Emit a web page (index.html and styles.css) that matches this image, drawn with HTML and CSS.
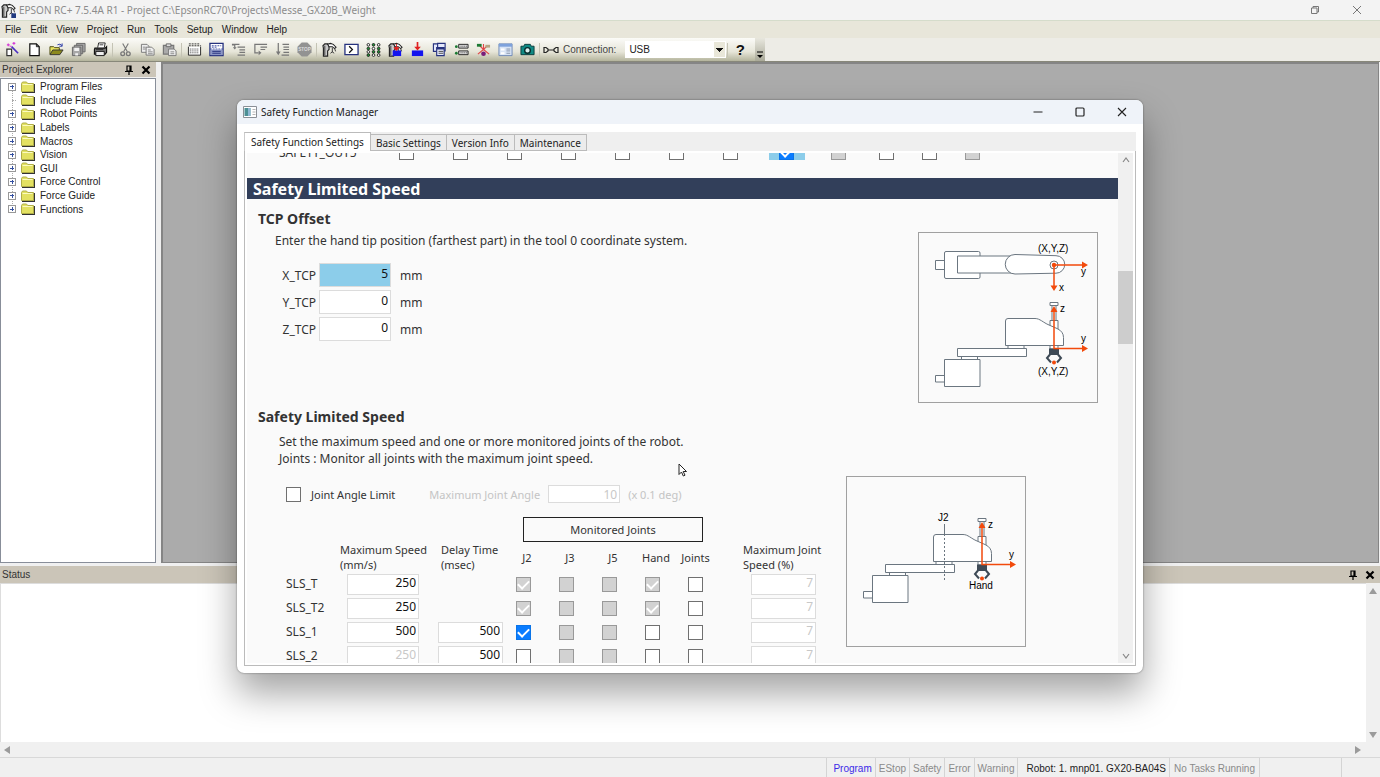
FILE: index.html
```html
<!DOCTYPE html>
<html lang="en">
<head>
    <meta charset="UTF-8">
    <meta name="viewport" content="width=device-width, initial-scale=1.0">
    <title>EPSON RC+ 7.5.4A R1</title>
    <link rel="stylesheet" href="styles.css">
</head>
<body>
    <svg class="defs" aria-hidden="true">
        <symbol id="robot" viewBox="0 0 16 16">
            <path d="M1.500 15V6.500L1 4l2-2h3l1.500 1.500V8L6 9.500V15z" fill="#c9c9c9" stroke="#222" stroke-width="1.200"/>
            <path d="M6 2.500l3-1 3 1 3 3-1.500 1.500L11 5H7.500z" fill="#fff" stroke="#222" stroke-width="1.100"/>
            <path d="M3 4v10M11 6v5M13.500 7l1 3M9 12l2-1.500 2 1.500" fill="none" stroke="#333"/>
        </symbol>
        <symbol id="pin" viewBox="0 0 10 10">
            <path d="M3 1h4v5H3zM6 1v5M1 6.500h8M5 7v3" fill="none" stroke="#000" stroke-width="1.200"/>
        </symbol>
        <symbol id="close" viewBox="0 0 10 10">
            <path d="M1.500 1.500l7 7M8.500 1.500l-7 7" stroke="#000" stroke-width="2.200"/>
        </symbol>
        <symbol id="folder" viewBox="0 0 14 12">
            <path d="M1 11.500h12.500V3" fill="none" stroke="#333" stroke-width="1.400"/>
            <path d="M.5 2.500l1-1.500h4l1.200 1.500H12.500v8H.5z" fill="#e3e162" stroke="#b0ae48"/>
            <path d="M1.500 3.500h10" stroke="#fbfac0"/>
        </symbol>
        <symbol id="arm-side" viewBox="0 0 180 171" overflow="visible">
            <g fill="#fff" stroke="#6b7680" stroke-width="1">
                <path d="M17.500 143.500h9v6.500h-9zM43.500 124.500h16v3h-16zM90 113.500h16v3H90z"/>
                <path d="M26.500 127.500h35.500v27H26.500zM39.500 116.500h69v8h-69z"/>
                <path d="M132 70.500h8v3h-8zM134 73.500h4v15h-4zM132 88.500h8v9h-8zM132 113h8v4h-8z"/>
                <path d="M87.500 113.500V89q0-2.500 2.500-2.500h27c5 0 8 4 14 6.500l8 3.500q6.500 3 6.500 9v8z"/>
            </g>
            <path d="M131 116.500h10v6.500h-10z" fill="#3e4a56"/>
            <path d="M132 122.500l-3 3.500 4 4.500M140 122.500l3 3.500-4 4.500" fill="none" stroke="#3e4a56" stroke-width="2"/>
            <path d="M136 78v38.500h29" fill="none" stroke="#f24a0c" stroke-width="1.500"/>
            <path d="M132.500 80l3.500-6 3.500 6zM164 113l6 3.500-6 3.500z" fill="#f24a0c"/>
            <circle cx="136" cy="130.500" r="2" fill="#f24a0c"/>
            <text x="142" y="80">z</text>
            <text x="163" y="110">y</text>
        </symbol>
    </svg>

    <header class="title-bar">
        <svg class="app-icon" viewBox="0 0 16 16"><use href="#robot"/><path d="M11 11h5v5h-5z" fill="#223a80"/></svg>
        <span class="app-title">EPSON RC+ 7.5.4A R1 - Project C:\EpsonRC70\Projects\Messe_GX20B_Weight</span>
        <button class="window-button" aria-label="Restore"><svg viewBox="0 0 10 10"><path d="M1.500 3h5.500v5.500H1.500zM3 3V1.500h5.500V7H7" fill="none" stroke="#777"/></svg></button>
        <button class="window-button" aria-label="Close"><svg viewBox="0 0 10 10"><path d="M1 1l8 8M9 1L1 9" stroke="#777"/></svg></button>
    </header>

    <nav class="menu-bar">
        <button>File</button>
        <button>Edit</button>
        <button>View</button>
        <button>Project</button>
        <button>Run</button>
        <button>Tools</button>
        <button>Setup</button>
        <button>Window</button>
        <button>Help</button>
    </nav>

    <div class="toolbar-row">
        <div class="toolbar">
            <button aria-label="New Project"><svg viewBox="0 0 16 16"><path d="M2 7.500h5v7H2z" fill="#fff" stroke="#333" stroke-width="1.300"/><path d="M7 5l7 7" stroke="#4b2fc0" stroke-width="1.800"/><path d="M2 3h3M3.500 1.500v3M8 1.500h3M9.500 0v3M5 4.500h2" stroke="#d63bd6" stroke-width="1.200"/></svg></button>
            <button aria-label="New"><svg viewBox="0 0 16 16"><path d="M3 2h7l3 3v9.500H3z" fill="#fff" stroke="#111" stroke-width="1.300"/><path d="M10 2v3h3" fill="none" stroke="#111"/></svg></button>
            <button aria-label="Open"><svg viewBox="0 0 16 16"><path d="M1 13V5h4l1 1h5v3" fill="#e8e460" stroke="#4c4a10"/><path d="M1 13.500l3-5h11l-3.500 5z" fill="#8c8a1c" stroke="#333"/><path d="M9 3q3-2 5 1M14 1.500V4.500h-3" fill="none" stroke="#2a3aa8"/></svg></button>
            <button aria-label="Save All"><svg viewBox="0 0 16 16"><g fill="#a8a8a8" stroke="#666"><path d="M6 1.500h9v9H6z"/><path d="M3.500 3.500h9v9h-9z"/><path d="M1.500 5.500h9v9h-9z"/></g><path d="M3.500 6h5v3.500h-5zM4.500 12h3v2.500h-3z" fill="#f1f1f1"/></svg></button>
            <button aria-label="Print"><svg viewBox="0 0 16 16"><path d="M5 6l1-5h7l-1 5" fill="#fff" stroke="#222"/><path d="M2 6.500h11l1.500-1.500V11L13 13H1.500V8z" fill="#777" stroke="#111" stroke-width="1.200"/><path d="M3 10h9v4.500H3z" fill="#eee" stroke="#111"/><path d="M7 3h4M3 8h8" stroke="#333"/></svg></button>
            <span class="separator"></span>
            <button aria-label="Cut"><svg viewBox="0 0 16 16"><path d="M5 1.500l5 9M11 1.500l-5 9" stroke="#777" stroke-width="1.200"/><g fill="none" stroke="#777" stroke-width="1.400"><circle cx="5" cy="12.500" r="2"/><circle cx="11" cy="12.500" r="2"/></g></svg></button>
            <button aria-label="Copy"><svg viewBox="0 0 16 16"><g fill="#eee" stroke="#777"><path d="M1.500 2.500h6l2 2v6.500h-8z"/><path d="M6.500 5.500h6l2.500 2.500v6H6.500z"/></g><path d="M3 5.500h3M3 7.500h3M8.500 8.500h3M8.500 10.500h5M8.500 12.500h5" stroke="#888"/></svg></button>
            <button aria-label="Paste"><svg viewBox="0 0 16 16"><path d="M1.500 3.500h11v9.500h-11z" fill="#aaa" stroke="#777" stroke-width="1.300"/><path d="M4.500 2h5v3h-5z" fill="#ddd" stroke="#666"/><path d="M7 7.500h6l2 2V14.500H7z" fill="#eee" stroke="#777"/><path d="M9 10.500h4M9 12.500h4" stroke="#888"/></svg></button>
            <span class="separator"></span>
            <button aria-label="Build"><svg viewBox="0 0 16 16"><path d="M1.500 5v9h13V5" fill="#fff" stroke="#222"/><path d="M2 4h13M2 2h12" stroke="#333" stroke-dasharray="2 1"/><path d="M3 7.500h10M3 9.500h10M3 11.500h10" stroke="#333" stroke-dasharray="1 1"/></svg></button>
            <button aria-label="Run Window"><svg viewBox="0 0 16 16"><path d="M1 1.500h14v13H1z" fill="#fff" stroke="#26327e" stroke-width="1.400"/><path d="M1 7.500h14M3 4h10M3 5.500h6" stroke="#3948a0" stroke-dasharray="2 1"/><path d="M2 8h12v6H2z" fill="#8b96c6"/><path d="M3.500 10h9M3.500 12h9" stroke="#26327e"/></svg></button>
            <button aria-label="Step Into"><svg viewBox="0 0 16 16"><path d="M4 6V3H1M1 2.500h8M7 5.500h8M9 8.500h6M9 11h6M7 14h8" fill="none" stroke="#777" stroke-width="1.300"/><path d="M2 5.500h4L4 8z" fill="#777"/></svg></button>
            <button aria-label="Step Over"><svg viewBox="0 0 16 16"><path d="M4 2.500H2v9h4M4 2.500h11M8 5.500h7M8 8h5" fill="none" stroke="#777" stroke-width="1.300"/><path d="M6 9l3 2.500L6 14z" fill="#777"/></svg></button>
            <button aria-label="Walk"><svg viewBox="0 0 16 16"><path d="M3.500 1v10M8 2.500h7M9 5.500h6M9 8h6M9 11h6M7 14h8" stroke="#777" stroke-width="1.300"/><path d="M1 10h5l-2.500 4z" fill="#777"/></svg></button>
            <button aria-label="Stop"><svg viewBox="0 0 16 16"><path d="M5 .5h6L15.500 5v6L11 15.500H5L.5 11V5z" fill="#929292"/><text class="stop-text" x="8" y="10">STOP</text></svg></button>
            <span class="separator"></span>
            <button aria-label="Robot Manager"><svg viewBox="0 0 16 16"><use href="#robot"/></svg></button>
            <button aria-label="Command Window"><svg viewBox="0 0 16 16"><path d="M1 2.500h14v11H1z" fill="#fff" stroke="#26327e" stroke-width="1.400"/><path d="M5.500 4.500L9 8l-3.500 3.500" fill="none" stroke="#111" stroke-width="1.300"/></svg></button>
            <button aria-label="I/O Monitor"><svg viewBox="0 0 16 16"><g fill="#fff" stroke="#222"><circle cx="2.500" cy="3" r="1.400"/><circle cx="8" cy="7" r="1.400"/><circle cx="13.500" cy="3" r="1.400"/><circle cx="2.500" cy="10.500" r="1.400"/><circle cx="13.500" cy="14" r="1.400"/><circle cx="8" cy="14" r="1.400"/></g><g fill="#1c9a33" stroke="#222"><circle cx="8" cy="3" r="1.400"/><circle cx="2.500" cy="7" r="1.400"/><circle cx="13.500" cy="7" r="1.400"/><circle cx="8" cy="10.500" r="1.400"/><circle cx="13.500" cy="10.500" r="1.400"/><circle cx="2.500" cy="14" r="1.400"/></g></svg></button>
            <button aria-label="Task Manager"><svg viewBox="0 0 16 16"><use href="#robot"/><path d="M5 9h9v6H5z" fill="#1414ee"/><path d="M9 2v5M6.500 6h5L9 9z" fill="#e02020" stroke="#e02020"/></svg></button>
            <button aria-label="Download"><svg viewBox="0 0 16 16"><path d="M2 9h12v6H2z" fill="#1414ee"/><path d="M8 0v6" stroke="#e02020" stroke-width="1.800"/><path d="M4.500 5h7L8 9z" fill="#e02020"/></svg></button>
            <button aria-label="Copy Windows"><svg viewBox="0 0 16 16"><g fill="#e4e8fb" stroke="#26327e" stroke-width="1.200"><path d="M1.500 2h8v8h-8z"/><path d="M6 1.500h8v8H6z"/><path d="M5 6h8v8.500H5z"/></g><path d="M5 7h8" stroke="#26327e" stroke-width="2"/><path d="M7 10h5M7 12h5" stroke="#444"/></svg></button>
            <button aria-label="Controller"><svg viewBox="0 0 16 16"><g fill="#ddd" stroke="#222"><path d="M5 2.500h10v4H5z"/><path d="M5 9.500h10v4H5z"/></g><path d="M7 4.500h7M7 11.500h7" stroke="#444" stroke-dasharray="1 1"/><circle cx="2.500" cy="5" r="1.500" fill="#1c7a33"/><circle cx="2.500" cy="12" r="1.500" fill="#1c7a33"/></svg></button>
            <button aria-label="Force Monitor"><svg viewBox="0 0 16 16"><path d="M8 8V2M8 8l-6 5M8 8l6 5M8 8L4 4M8 8l4-4" stroke="#e04848" stroke-width="1.200"/><path d="M1 2h5v3H1z" fill="#1c7a33"/><path d="M10 3h5v3h-5z" fill="#b7a584"/><circle cx="8" cy="12.500" r="2.500" fill="#7a1c7a"/></svg></button>
            <button aria-label="GUI Builder"><svg viewBox="0 0 16 16"><path d="M1 2h14v12.500H1z" fill="#d8e4f5" stroke="#6d88b5"/><path d="M1 2h14v3H1z" fill="#7ea2dc"/><path d="M3 7h4v2H3zM3 11h4v2H3z" fill="#fff"/><path d="M9 7.500h4M9 9.500h4M9 12h4" stroke="#8592a8"/></svg></button>
            <button aria-label="Camera"><svg viewBox="0 0 16 16"><path d="M1 4.500h3l1-2h6l1 2h3v9H1z" fill="#0f8a84" stroke="#0b3b3a"/><circle cx="8" cy="9" r="3" fill="#d7efee" stroke="#062c2b" stroke-width="1.500"/></svg></button>
            <span class="separator"></span>
            <label class="connection" for="connection">
                <svg viewBox="0 0 16 8"><path d="M1 1.500h2L5 3v2L3 6.500H1zM15 1.500h-2L11 3v2l2 1.500h2zM5 4h6" fill="none" stroke="#222" stroke-width="1.200"/></svg>
                Connection:
            </label>
            <div class="select-box">
                <select id="connection"><option>USB</option></select>
            </div>
            <span class="separator"></span>
            <button class="help" aria-label="Help">?</button>
        </div>
        <button class="overflow" aria-label="More buttons"><svg viewBox="0 0 8 8"><path d="M1 1h6" stroke="#000"/><path d="M1 4h6L4 7z"/></svg></button>
    </div>

    <main class="workspace">
        <aside class="explorer">
            <div class="panel-header">
                <span>Project Explorer</span>
                <button aria-label="Pin"><svg><use href="#pin"/></svg></button>
                <button aria-label="Close"><svg><use href="#close"/></svg></button>
            </div>
            <div class="tree-pane">
                <ul class="tree">
                    <li><button class="expander" aria-label="Expand"></button><svg><use href="#folder"/></svg>Program Files</li>
                    <li><span class="branch"></span><svg><use href="#folder"/></svg>Include Files</li>
                    <li><button class="expander" aria-label="Expand"></button><svg><use href="#folder"/></svg>Robot Points</li>
                    <li><button class="expander" aria-label="Expand"></button><svg><use href="#folder"/></svg>Labels</li>
                    <li><button class="expander" aria-label="Expand"></button><svg><use href="#folder"/></svg>Macros</li>
                    <li><button class="expander" aria-label="Expand"></button><svg><use href="#folder"/></svg>Vision</li>
                    <li><button class="expander" aria-label="Expand"></button><svg><use href="#folder"/></svg>GUI</li>
                    <li><button class="expander" aria-label="Expand"></button><svg><use href="#folder"/></svg>Force Control</li>
                    <li><button class="expander" aria-label="Expand"></button><svg><use href="#folder"/></svg>Force Guide</li>
                    <li><button class="expander" aria-label="Expand"></button><svg><use href="#folder"/></svg>Functions</li>
                </ul>
            </div>
        </aside>
        <div class="mdi-area"></div>
    </main>

    <section class="status-panel">
        <div class="panel-header">
            <span>Status</span>
            <button aria-label="Pin"><svg><use href="#pin"/></svg></button>
            <button aria-label="Close"><svg><use href="#close"/></svg></button>
        </div>
        <div class="status-body">
            <div class="status-log"></div>
            <div class="scroll-y">
                <svg viewBox="0 0 8 6"><path d="M0 6h8L4 0z"/></svg>
                <svg viewBox="0 0 8 6"><path d="M0 0h8L4 6z"/></svg>
            </div>
        </div>
        <div class="scroll-x">
            <svg viewBox="0 0 6 8"><path d="M6 0v8L0 4z"/></svg>
            <svg viewBox="0 0 6 8"><path d="M0 0v8l6-4z"/></svg>
        </div>
    </section>

    <footer class="status-bar">
        <span class="cell program">Program</span>
        <span class="cell">EStop</span>
        <span class="cell">Safety</span>
        <span class="cell">Error</span>
        <span class="cell">Warning</span>
        <span class="cell robot">Robot: 1. mnp01. GX20-BA04S</span>
        <span class="cell tasks">No Tasks Running</span>
        <span class="cell blank"></span>
        <span class="cell grip"></span>
    </footer>

    <!-- Safety Function Manager window -->
    <div class="dialog" role="dialog" aria-labelledby="dialog-title">
        <div class="dialog-title">
            <svg class="dialog-icon" viewBox="0 0 14 12"><path d="M.5.5h13v11H.5z" fill="#fff" stroke="#8a8f96"/><path d="M1.500 2h6v8h-6z" fill="#4b8f94"/><path d="M5 2h2.500v8H5z" fill="#8fb7d2"/><path d="M9.500 3.500h3M9.500 6h3M9.500 8.500h3" stroke="#b5b5b5"/></svg>
            <span id="dialog-title">Safety Function Manager</span>
            <button class="window-button" aria-label="Minimize"><svg viewBox="0 0 10 10"><path d="M.5 5h9" stroke="#222"/></svg></button>
            <button class="window-button" aria-label="Maximize"><svg viewBox="0 0 10 10"><rect x="1" y="1" width="8" height="8" rx="1" fill="none" stroke="#222" stroke-width="1.200"/></svg></button>
            <button class="window-button" aria-label="Close"><svg viewBox="0 0 10 10"><path d="M1 1l8 8M9 1L1 9" stroke="#222" stroke-width="1.100"/></svg></button>
        </div>
        <div class="dialog-body">
            <div class="tabs" role="tablist">
                <button class="tab active" role="tab" aria-selected="true">Safety Function Settings</button>
                <button class="tab" role="tab">Basic Settings</button>
                <button class="tab" role="tab">Version Info</button>
                <button class="tab" role="tab">Maintenance</button>
            </div>
            <div class="tab-panel" role="tabpanel">
                <div class="settings">
                    <div class="outputs-row">
                        <span>SAFETY_OUT5</span>
                        <input type="checkbox" aria-label="Output 1">
                        <input type="checkbox" aria-label="Output 2">
                        <input type="checkbox" aria-label="Output 3">
                        <input type="checkbox" aria-label="Output 4">
                        <input type="checkbox" aria-label="Output 5">
                        <input type="checkbox" aria-label="Output 6">
                        <input type="checkbox" aria-label="Output 7">
                        <span class="changed"><input type="checkbox" aria-label="Output 8" checked></span>
                        <input type="checkbox" aria-label="Output 9" disabled>
                        <input type="checkbox" aria-label="Output 10">
                        <input type="checkbox" aria-label="Output 11">
                        <input type="checkbox" aria-label="Output 12" disabled>
                    </div>

                    <h2>Safety Limited Speed</h2>

                    <section class="tcp-section">
                        <div>
                            <h3>TCP Offset</h3>
                            <p class="hint">Enter the hand tip position (farthest part) in the tool 0 coordinate system.</p>
                            <div class="tcp-fields">
                                <label for="x-tcp">X_TCP</label><input class="number edited" type="text" id="x-tcp" value="5"><span>mm</span>
                                <label for="y-tcp">Y_TCP</label><input class="number" type="text" id="y-tcp" value="0"><span>mm</span>
                                <label for="z-tcp">Z_TCP</label><input class="number" type="text" id="z-tcp" value="0"><span>mm</span>
                            </div>
                        </div>
                        <svg class="figure" viewBox="1 1 178 169" role="img" aria-label="TCP offset axes">
                            <g fill="#fff" stroke="#6b7680">
                                <path d="M17.500 28.500h9v9h-9z"/>
                                <rect x="26.500" y="19.500" width="35.500" height="27" rx="1.500"/>
                                <path d="M39.500 24H98v17H39.500z"/>
                                <path d="M97 22.500l41 1.200a8.500 8.500 0 0 1 0 17.500L97 42a9.700 9.700 0 0 1 0-19.500z"/>
                                <circle cx="136" cy="33" r="4"/>
                            </g>
                            <circle cx="136" cy="33" r="2.200" fill="#f24a0c"/>
                            <path d="M136 54V33h29" fill="none" stroke="#f24a0c" stroke-width="1.500"/>
                            <path d="M132.500 53.500l3.500 5.500 3.500-5.500zM164 29.500l6 3.500-6 3.500z" fill="#f24a0c"/>
                            <text x="120" y="20">(X,Y,Z)</text>
                            <text x="163" y="43">y</text>
                            <text x="141" y="59">x</text>
                            <use href="#arm-side" width="180" height="171"/>
                            <text x="120" y="143">(X,Y,Z)</text>
                        </svg>
                    </section>

                    <section class="speed-section">
                        <div>
                            <h3>Safety Limited Speed</h3>
                            <p class="lead">Set the maximum speed and one or more monitored joints of the robot.<br>Joints : Monitor all joints with the maximum joint speed.</p>
                            <div class="angle-row">
                                <input type="checkbox" id="angle-limit">
                                <label for="angle-limit">Joint Angle Limit</label>
                                <label class="off" for="max-angle">Maximum Joint Angle</label>
                                <input class="number" type="text" id="max-angle" value="10" disabled>
                                <span class="off">(x 0.1 deg)</span>
                            </div>
                            <table class="speed-table">
                                <colgroup>
                                    <col class="col-name"><col class="col-speed"><col class="col-delay">
                                    <col class="col-joint"><col class="col-joint"><col class="col-joint"><col class="col-joint"><col class="col-joint">
                                    <col class="col-max">
                                </colgroup>
                                <thead>
                                    <tr class="group">
                                        <td colspan="3"></td>
                                        <th colspan="5"><div class="monitored">Monitored Joints</div></th>
                                        <td></td>
                                    </tr>
                                    <tr class="heads">
                                        <td></td>
                                        <th class="left">Maximum Speed<br>(mm/s)</th>
                                        <th class="left delay">Delay Time<br>(msec)</th>
                                        <th class="joint">J2</th>
                                        <th class="joint">J3</th>
                                        <th class="joint">J5</th>
                                        <th class="joint">Hand</th>
                                        <th>Joints</th>
                                        <th class="left max">Maximum Joint<br>Speed (%)</th>
                                    </tr>
                                </thead>
                                <tbody>
                                    <tr>
                                        <th>SLS_T</th>
                                        <td class="speed"><input class="number" type="text" aria-label="SLS_T speed" value="250"></td>
                                        <td></td>
                                        <td><input type="checkbox" aria-label="SLS_T J2" checked disabled></td>
                                        <td><input type="checkbox" aria-label="SLS_T J3" disabled></td>
                                        <td><input type="checkbox" aria-label="SLS_T J5" disabled></td>
                                        <td><input type="checkbox" aria-label="SLS_T Hand" checked disabled></td>
                                        <td><input type="checkbox" aria-label="SLS_T Joints"></td>
                                        <td class="max"><input class="number" type="text" aria-label="SLS_T joint speed" value="7" disabled></td>
                                    </tr>
                                    <tr>
                                        <th>SLS_T2</th>
                                        <td class="speed"><input class="number" type="text" aria-label="SLS_T2 speed" value="250"></td>
                                        <td></td>
                                        <td><input type="checkbox" aria-label="SLS_T2 J2" checked disabled></td>
                                        <td><input type="checkbox" aria-label="SLS_T2 J3" disabled></td>
                                        <td><input type="checkbox" aria-label="SLS_T2 J5" disabled></td>
                                        <td><input type="checkbox" aria-label="SLS_T2 Hand" checked disabled></td>
                                        <td><input type="checkbox" aria-label="SLS_T2 Joints"></td>
                                        <td class="max"><input class="number" type="text" aria-label="SLS_T2 joint speed" value="7" disabled></td>
                                    </tr>
                                    <tr>
                                        <th>SLS_1</th>
                                        <td class="speed"><input class="number" type="text" aria-label="SLS_1 speed" value="500"></td>
                                        <td><input class="number" type="text" aria-label="SLS_1 delay" value="500"></td>
                                        <td><input type="checkbox" aria-label="SLS_1 J2" checked></td>
                                        <td><input type="checkbox" aria-label="SLS_1 J3" disabled></td>
                                        <td><input type="checkbox" aria-label="SLS_1 J5" disabled></td>
                                        <td><input type="checkbox" aria-label="SLS_1 Hand"></td>
                                        <td><input type="checkbox" aria-label="SLS_1 Joints"></td>
                                        <td class="max"><input class="number" type="text" aria-label="SLS_1 joint speed" value="7" disabled></td>
                                    </tr>
                                    <tr>
                                        <th>SLS_2</th>
                                        <td class="speed"><input class="number" type="text" aria-label="SLS_2 speed" value="250" disabled></td>
                                        <td><input class="number" type="text" aria-label="SLS_2 delay" value="500"></td>
                                        <td><input type="checkbox" aria-label="SLS_2 J2"></td>
                                        <td><input type="checkbox" aria-label="SLS_2 J3" disabled></td>
                                        <td><input type="checkbox" aria-label="SLS_2 J5" disabled></td>
                                        <td><input type="checkbox" aria-label="SLS_2 Hand"></td>
                                        <td><input type="checkbox" aria-label="SLS_2 Joints"></td>
                                        <td class="max"><input class="number" type="text" aria-label="SLS_2 joint speed" value="7" disabled></td>
                                    </tr>
                                </tbody>
                            </table>
                        </div>
                        <svg class="figure" viewBox="1 1 178 169" role="img" aria-label="Monitored joint J2 and hand">
                            <use href="#arm-side" width="180" height="171" y="-28"/>
                            <path d="M98.500 48v10" stroke="#6b7680"/>
                            <path d="M98.500 58v46" stroke="#6b7680" stroke-dasharray="2 2"/>
                            <text x="92" y="45">J2</text>
                            <text x="123" y="113">Hand</text>
                        </svg>
                    </section>
                </div>
                <div class="panel-scroll">
                    <svg viewBox="0 0 8 8"><path d="M1 6l3-4 3 4" fill="none" stroke="#888" stroke-width="1.200"/></svg>
                    <div class="track"><div class="thumb"></div></div>
                    <svg viewBox="0 0 8 8"><path d="M1 2l3 4 3-4" fill="none" stroke="#888" stroke-width="1.200"/></svg>
                </div>
            </div>
        </div>
    </div>

    <svg class="cursor" viewBox="0 0 10 14" aria-hidden="true"><path d="M1 1v10.500l2.500-2.500 1.800 4 1.700-.8-1.800-3.700H8.500z" fill="#fff" stroke="#222"/></svg>
</body>
</html>
```
FILE: styles.css
```css
* {
    box-sizing: border-box;
}
body {
    margin: 0;
    height: 100vh;
    overflow: hidden;
    display: flex;
    flex-direction: column;
    position: relative;
    background-color: #f0f0f0;
    color: #222;
    font-family: "Liberation Sans", Arial, sans-serif;
    font-size: 10px;
}
button {
    display: flex;
    align-items: center;
    justify-content: center;
    padding: 0;
    border: none;
    background: none;
    color: inherit;
    font: inherit;
}
.defs {
    display: none;
}

/* main window */
.title-bar {
    display: flex;
    align-items: center;
    height: 20px;
    flex: none;
    padding-right: 2px;
    background-color: #f3f3f3;
    color: #8c8c8c;
    font-family: "Noto Sans", sans-serif;
}
.app-icon {
    width: 15px;
    height: 15px;
    margin: 0 3px 0 1px;
}
.app-title {
    flex: 1;
}
.window-button {
    width: 42px;
    height: 20px;
}
.window-button svg {
    width: 10px;
    height: 10px;
}
.menu-bar {
    display: flex;
    align-items: center;
    gap: 9px;
    height: 18px;
    flex: none;
    padding-left: 5px;
    border-top: 1px solid #d5dccb;
    background-color: #e8e6da;
}
.toolbar-row {
    display: flex;
    height: 24px;
    flex: none;
    border-bottom: 1px solid #88887a;
    background-color: #edece6;
}
.toolbar {
    display: flex;
    align-items: center;
    width: 755px;
    padding-left: 1px;
    background: linear-gradient(#fbfbf8, #e6e5d8 60%, #b4b49c);
}
.toolbar button {
    width: 22px;
    height: 22px;
}
.toolbar button svg {
    width: 15px;
    height: 15px;
}
.stop-text {
    font-size: 5px;
    font-weight: bold;
    fill: #ddd;
    text-anchor: middle;
}
.separator {
    width: 1px;
    height: 14px;
    margin: 0 1px;
    background-color: #c4c3b4;
}
.connection {
    display: flex;
    align-items: center;
    gap: 4px;
    margin-left: 2px;
    color: #444;
}
.connection svg {
    width: 16px;
    height: 8px;
}
.select-box {
    display: flex;
    width: 101px;
    height: 17px;
    margin-left: 9px;
    background-color: #fff;
}
.select-box select {
    flex: 1;
    border: none;
    appearance: none;
    padding: 0 4px;
    color: #222;
    font: inherit;
    background: linear-gradient(#111, #111) no-repeat right 3px top 7px / 7px 1px,
        linear-gradient(#111, #111) no-repeat right 4px top 8px / 5px 1px,
        linear-gradient(#111, #111) no-repeat right 5px top 9px / 3px 1px,
        linear-gradient(#111, #111) no-repeat right 6px top 10px / 1px 1px,
        linear-gradient(#e9e7d9, #e9e7d9) no-repeat right 1px top 1px / 11px 15px,
        #fff;
}
.toolbar .help {
    font-size: 15px;
    font-weight: bold;
    color: #111;
}
.overflow {
    width: 10px;
    align-items: flex-end;
    padding-bottom: 2px;
    background: linear-gradient(#e8e7de, #a9a998);
}
.overflow svg {
    width: 8px;
    height: 8px;
}
.workspace {
    display: flex;
    flex: 1;
    min-height: 0;
    padding-bottom: 3px;
}
.explorer {
    display: flex;
    flex-direction: column;
    width: 156px;
}
.panel-header {
    display: flex;
    align-items: center;
    gap: 7px;
    height: 15px;
    flex: none;
    padding: 0 5px 0 2px;
    background-color: #cbc5b8;
    color: #333;
}
.panel-header span {
    flex: 1;
}
.panel-header svg {
    display: block;
    width: 10px;
    height: 10px;
}
.tree-pane {
    flex: 1;
    margin-top: 1px;
    border: 1px solid #888e99;
    background-color: #fff;
}
.tree {
    display: grid;
    grid-auto-rows: 1fr;
    height: 137px;
    margin: 0;
    padding: 1px 0 0 7px;
    list-style: none;
    background: repeating-linear-gradient(#aaa 0 1px, #fff 1px 2px) no-repeat 11px 8px / 1px 124px;
}
.tree li {
    display: flex;
    align-items: center;
}
.tree svg {
    width: 14px;
    height: 12px;
    margin: 0 5px 0 5px;
}
.expander {
    width: 8px;
    height: 8px;
    border: 1px solid #999;
    background: linear-gradient(#3450a0, #3450a0) no-repeat center / 4px 1px,
        linear-gradient(#3450a0, #3450a0) no-repeat center / 1px 4px,
        #fff;
}
.branch {
    width: 4px;
    margin-left: 4px;
    border-top: 1px dotted #aaa;
}
.mdi-area {
    flex: 1;
    margin: 0 1px 0 5px;
    border: 1px solid #858585;
    border-width: 2px 1px 1px 2px;
    background-color: #ababab;
}

/* status panel */
.status-panel {
    display: flex;
    flex-direction: column;
    height: 191px;
    flex: none;
}
.status-panel .panel-header {
    height: 17px;
}
.status-body {
    display: flex;
    flex: 1;
}
.status-log {
    flex: 1;
    border: 1px solid #ddd;
    border-width: 1px 0 0 1px;
    background-color: #fff;
}
.scroll-y,
.scroll-x {
    display: flex;
    align-items: center;
    justify-content: space-between;
    fill: #9b9b9b;
}
.scroll-y {
    flex-direction: column;
    width: 14px;
    padding: 5px 0 4px;
}
.scroll-y svg {
    width: 8px;
    height: 6px;
}
.scroll-x {
    height: 15px;
    padding: 0 19px 0 4px;
}
.scroll-x svg {
    width: 6px;
    height: 8px;
}
.status-bar {
    display: flex;
    justify-content: flex-end;
    height: 20px;
    flex: none;
    border-top: 1px solid #d8d8d8;
    color: #8a8a8a;
}
.cell {
    padding: 0 3px;
    border-left: 1px solid #d4d4d4;
    line-height: 21px;
}
.cell.program {
    padding-left: 6px;
    color: #3b2be8;
}
.cell.robot {
    padding-left: 8px;
    color: #222;
}
.cell.tasks {
    padding: 0 4px;
}
.cell.blank {
    width: 82px;
}
.cell.grip {
    width: 39px;
}

/* safety function manager */
.dialog {
    position: absolute;
    top: 100px;
    right: 237px;
    bottom: 104px;
    left: 237px;
    display: flex;
    flex-direction: column;
    overflow: hidden;
    border-radius: 7px;
    background-color: #fff;
    box-shadow: 0 0 2px rgba(0, 0, 0, 0.5), 0 20px 36px rgba(0, 0, 0, 0.36);
    color: #333;
    font-family: "Noto Sans", sans-serif;
    font-size: 11px;
}
.dialog-title {
    display: flex;
    align-items: center;
    height: 24px;
    flex: none;
    padding-left: 6px;
    background-color: #eff3f9;
    color: #222;
    font-size: 10px;
}
.dialog-title span {
    flex: 1;
}
.dialog-icon {
    width: 14px;
    height: 12px;
    margin-right: 4px;
}
.dialog-body {
    display: flex;
    flex-direction: column;
    flex: 1;
    min-height: 0;
    padding: 8px 7px 7px;
}
.tabs {
    display: flex;
    align-items: flex-end;
    height: 19px;
    flex: none;
    background-color: #efefef;
}
.tab {
    height: 17px;
    padding: 0 5px;
    border: 1px solid #bbb;
    border-left: none;
    background-color: #ececec;
    color: #222;
    font-size: 10px;
}
.tab.active {
    height: 19px;
    padding: 0 6px;
    border-left: 1px solid #ccc;
    border-bottom: none;
    background-color: #fff;
}
.tab-panel {
    display: flex;
    flex: 1;
    min-height: 0;
    padding: 2px;
    border: 1px solid #bbb;
    border-top: none;
}
.settings {
    flex: 1;
    min-width: 0;
    overflow: hidden;
    background-color: #fafafa;
}
input[type="checkbox"] {
    display: grid;
    place-content: center;
    appearance: none;
    width: 15px;
    height: 15px;
    margin: 0;
    border: 1px solid #707070;
    background-color: #fff;
}
input[type="checkbox"]:checked {
    border-color: #0a74e8;
    background-color: #0a7cff;
}
input[type="checkbox"]:checked::after {
    content: "";
    width: 5px;
    height: 9px;
    margin-bottom: 2px;
    border: solid #fff;
    border-width: 0 2px 2px 0;
    transform: rotate(45deg);
}
input[type="checkbox"]:disabled {
    border-color: #999;
    background-color: #d2d2d2;
}
/* first row is scrolled half out of view */
.outputs-row {
    display: grid;
    grid-template-columns: 100px repeat(7, 54px) 60px 42px 54px 32px 54px;
    align-items: center;
    justify-items: center;
    height: 24px;
    margin-top: -13px;
    padding-left: 32px;
    font-size: 12px;
}
.outputs-row > span:first-child {
    justify-self: start;
}
.changed {
    padding: 0 11px 0 10px;
    background-color: #8ccdea;
}
.settings h2 {
    height: 21px;
    margin: 14px 0 0;
    padding-left: 6px;
    background-color: #323f5a;
    color: #fff;
    font-size: 16px;
    line-height: 22px;
}
.settings h3 {
    margin: 0;
    font-size: 14px;
    line-height: 20px;
}
.tcp-section,
.speed-section {
    display: flex;
    align-items: flex-start;
    padding: 10px 20px 4px 11px;
}
.speed-section {
    gap: 13px;
    padding-top: 0;
}
.figure {
    flex: none;
    width: 180px;
    height: 171px;
    border: 1px solid #a0a0a0;
    font-family: "Liberation Sans", Arial, sans-serif;
    font-size: 10px;
}
.tcp-section .figure {
    margin: 23px 0 0 auto;
}
.speed-section .figure {
    margin-top: 69px;
}
.hint {
    margin: 0;
    padding-left: 17px;
    font-size: 12px;
    line-height: 24px;
}
.tcp-fields {
    display: grid;
    grid-template-columns: 36px 72px auto;
    gap: 3px;
    align-items: center;
    margin: 10px 0 0 22px;
    font-size: 12px;
}
.tcp-fields label {
    text-align: right;
    white-space: nowrap;
}
.tcp-fields span {
    padding-left: 6px;
}
.number {
    display: block;
    width: 72px;
    height: 24px;
    padding: 0 2px 4px;
    border: 1px solid #dcdcdc;
    background-color: #fff;
    color: #111;
    font: inherit;
    font-size: 12px;
    text-align: right;
}
.number.edited {
    background-color: #8ccdea;
}
.number:disabled {
    color: #c8c8c8;
}
.lead {
    margin: 6px 0 0 21px;
    font-size: 12px;
    line-height: 17px;
}
.angle-row {
    display: flex;
    align-items: center;
    height: 18px;
    margin: 18px 0 0 28px;
}
.angle-row label {
    margin-left: 10px;
}
.angle-row .number {
    height: 18px;
    margin: 0 8px;
    padding-bottom: 0;
}
.off {
    color: #c4c4c4;
}
.angle-row .off:nth-child(3) {
    margin-left: 34px;
}
.speed-table {
    width: 547px;
    margin: 14px 0 0 28px;
    table-layout: fixed;
    border-collapse: collapse;
}
.speed-table th,
.speed-table td {
    padding: 0;
    font-weight: normal;
}
.col-name {
    width: 54px;
}
.col-speed {
    width: 98px;
}
.col-delay {
    width: 64px;
}
.col-joint {
    width: 43px;
}
.group {
    height: 25px;
}
.heads {
    height: 30px;
    line-height: 15px;
}
.speed-table .joint {
    padding-left: 7px;
}
.speed-table tbody tr {
    height: 24px;
}
.speed-table tbody th {
    font-size: 12px;
    line-height: 16px;
}
.speed-table tbody th,
.speed-table .left {
    text-align: left;
}
.speed-table .delay {
    padding-left: 3px;
}
.speed-table .max {
    padding-left: 26px;
}
.speed-table td.max {
    padding-left: 34px;
}
.speed-table .speed {
    padding-left: 7px;
}
.speed-table .number {
    width: 65px;
    height: 21px;
}
.speed-table .speed .number {
    width: 72px;
}
.speed-table input[type="checkbox"] {
    margin: 0 auto;
}
.monitored {
    height: 25px;
    margin: 0 14px 0 21px;
    border: 1px solid #222;
    line-height: 23px;
}
.panel-scroll {
    display: flex;
    flex-direction: column;
    align-items: center;
    justify-content: space-between;
    width: 15px;
    padding: 3px 0;
    background-color: #f0f0f0;
}
.panel-scroll svg {
    width: 8px;
    height: 8px;
}
.track {
    display: flex;
    flex: 1;
    width: 100%;
    padding-top: 107px;
}
.thumb {
    width: 100%;
    height: 73px;
    background-color: #cdcdcd;
}
.cursor {
    position: absolute;
    top: 463px;
    left: 678px;
    width: 10px;
    height: 14px;
}
```
